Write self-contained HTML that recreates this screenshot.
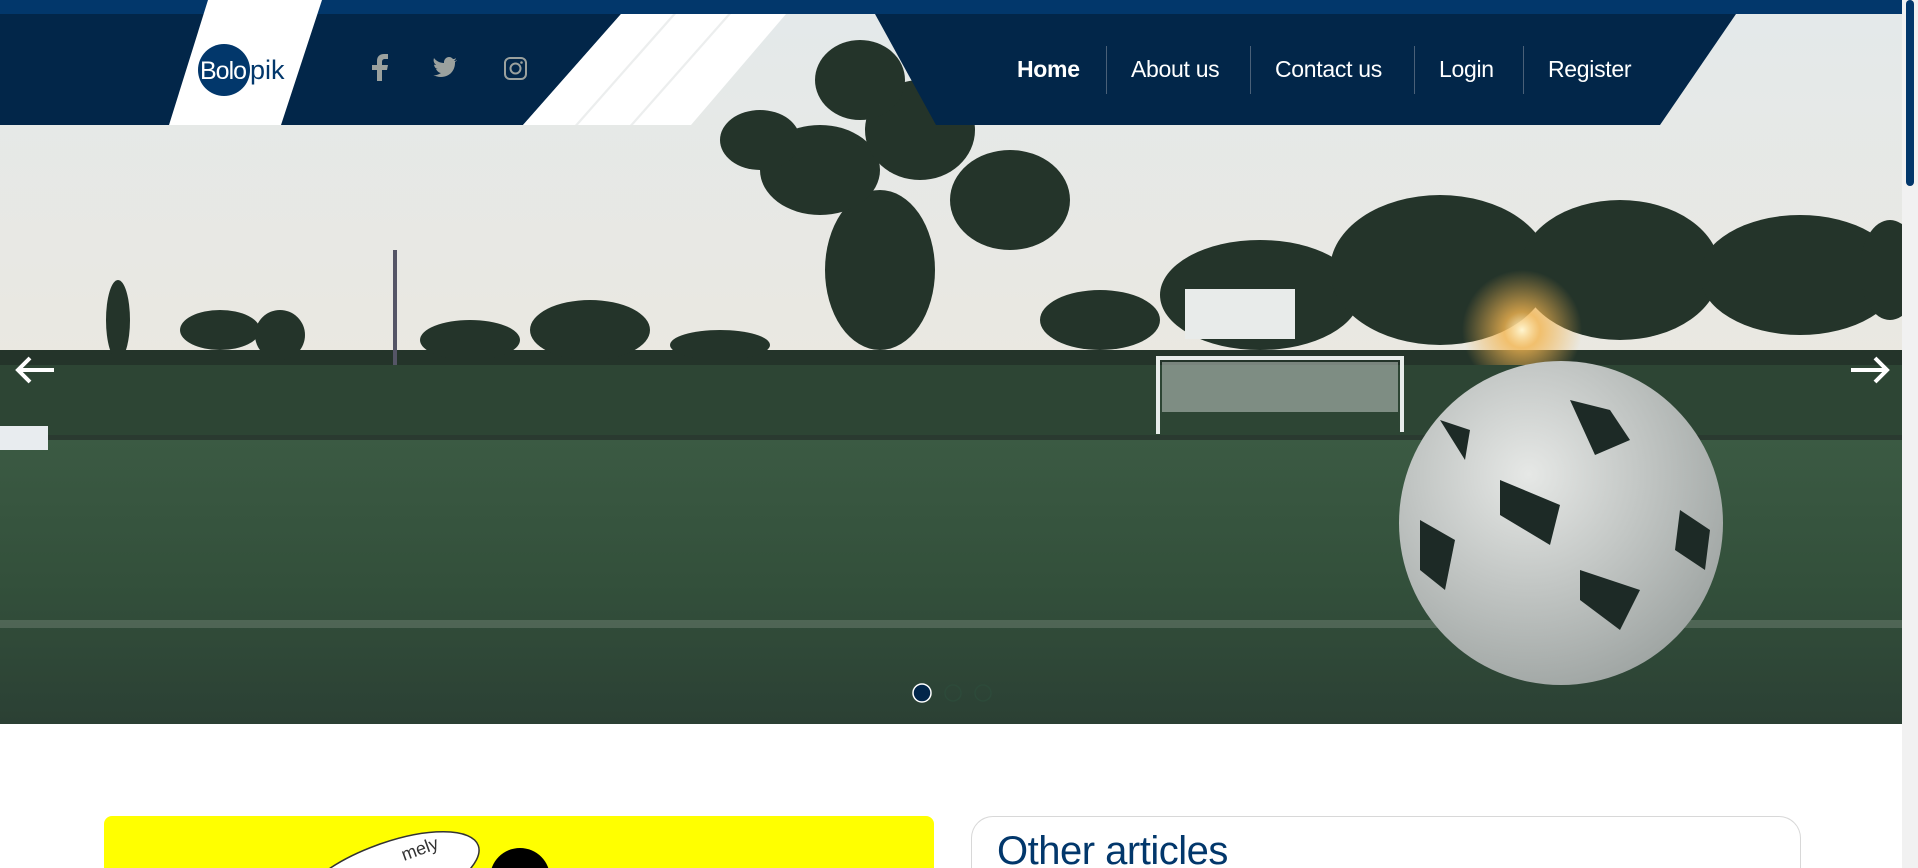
<!DOCTYPE html>
<html style="overflow:hidden"><head><meta charset="utf-8"><style>
*{margin:0;padding:0;box-sizing:border-box}
html,body{width:1918px;height:868px;overflow:hidden}
body{background:#fff;font-family:"Liberation Sans",sans-serif;position:relative}
.abs{position:absolute}
.nav a{position:absolute;top:56px;color:#fff;font-size:23px;text-decoration:none;letter-spacing:-0.3px}
.sep{position:absolute;top:46px;width:1px;height:48px;background:#4a6078}
</style></head><body>
<!-- hero -->
<svg class="abs" style="left:0;top:14px" width="1902" height="710" viewBox="0 14 1902 710">
<defs>
<linearGradient id="sky" x1="0" y1="0" x2="0" y2="1"><stop offset="0" stop-color="#e4e9ea"/><stop offset="1" stop-color="#ebe8df"/></linearGradient>
<linearGradient id="field" x1="0" y1="0" x2="0" y2="1"><stop offset="0" stop-color="#3b5a43"/><stop offset="0.5" stop-color="#33503b"/><stop offset="1" stop-color="#2b4034"/></linearGradient>
<radialGradient id="sun" cx="0.5" cy="0.5" r="0.5"><stop offset="0" stop-color="#fff6d0"/><stop offset="0.3" stop-color="#f3b550" stop-opacity="0.8"/><stop offset="1" stop-color="#f3b550" stop-opacity="0"/></radialGradient>
<radialGradient id="ball" cx="0.4" cy="0.35" r="0.7"><stop offset="0" stop-color="#e6e8e6"/><stop offset="1" stop-color="#9ea4a2"/></radialGradient>
</defs>
<rect x="0" y="14" width="1902" height="420" fill="url(#sky)"/>
<!-- treeline -->
<g fill="#24342a">
<rect x="0" y="350" width="1902" height="30"/>
<ellipse cx="118" cy="320" rx="12" ry="40"/><ellipse cx="220" cy="330" rx="40" ry="20"/><ellipse cx="280" cy="335" rx="25" ry="25"/>
<ellipse cx="470" cy="340" rx="50" ry="20"/><ellipse cx="590" cy="330" rx="60" ry="30"/>
<ellipse cx="720" cy="345" rx="50" ry="15"/>
<ellipse cx="880" cy="270" rx="55" ry="80"/><ellipse cx="820" cy="170" rx="60" ry="45"/><ellipse cx="920" cy="130" rx="55" ry="50"/>
<ellipse cx="1010" cy="200" rx="60" ry="50"/><ellipse cx="860" cy="80" rx="45" ry="40"/><ellipse cx="760" cy="140" rx="40" ry="30"/>
<ellipse cx="1100" cy="320" rx="60" ry="30"/><ellipse cx="1260" cy="295" rx="100" ry="55"/>
<ellipse cx="1440" cy="270" rx="110" ry="75"/><ellipse cx="1620" cy="270" rx="100" ry="70"/>
<ellipse cx="1800" cy="275" rx="100" ry="60"/><ellipse cx="1890" cy="270" rx="30" ry="50"/>
</g>
<rect x="393" y="250" width="4" height="120" fill="#556"/>
<rect x="1185" y="289" width="110" height="50" fill="#e8ebea"/>
<circle cx="1522" cy="330" r="60" fill="url(#sun)"/>
<!-- hedge -->
<rect x="0" y="365" width="1902" height="75" fill="#2d4534"/>
<rect x="0" y="435" width="1902" height="10" fill="#2a3a30"/>
<!-- field -->
<rect x="0" y="440" width="1902" height="284" fill="url(#field)"/>
<rect x="0" y="620" width="1902" height="8" fill="#6d7f72" opacity="0.5"/>
<!-- goal -->
<g stroke="#e8ecea" stroke-width="4" fill="none"><path d="M1158 434V358H1402V432"/></g>
<rect x="1162" y="362" width="236" height="50" fill="#cfd6d2" opacity="0.5"/>
<rect x="0" y="426" width="48" height="24" fill="#e8ecef"/>
<!-- ball -->
<circle cx="1561" cy="523" r="162" fill="url(#ball)"/>
<g fill="#1d2a26">
<path d="M1570 400l40 10 20 30-35 15z"/><path d="M1500 480l60 25-10 40-50-30z"/>
<path d="M1420 520l35 20-10 50-25-20z"/><path d="M1580 570l60 20-20 40-40-30z"/>
<path d="M1680 510l30 20-5 40-30-20z"/><path d="M1440 420l30 10-5 30z"/>
</g>
</svg>
<!-- top bar -->
<div class="abs" style="left:0;top:0;width:1902px;height:14px;background:#02376b"></div>
<svg class="abs" style="left:0;top:0" width="1902" height="126">
<polygon points="0,14 621,14 523,125 0,125" fill="#022649"/>
<polygon points="621,14 786,14 691,125 523,125" fill="#fff"/>
<polygon points="673,14 676,14 578,125 575,125" fill="#eceeee"/>
<polygon points="728,14 731,14 633,125 630,125" fill="#eceeee"/>
<polygon points="875,14 1736,14 1660,125 936,125" fill="#022649"/>
<polygon points="208,0 322,0 281,125 169,125" fill="#fff"/>
<circle cx="224" cy="70" r="26" fill="#02376b"/>
<text x="200" y="79" font-family="Liberation Sans" font-size="25" fill="#fff" letter-spacing="-1">Bolo</text>
<text x="250" y="79" font-family="Liberation Sans" font-size="27" fill="#02376b">pik</text>
<path d="M377 81V70h-5v-5h5v-4c0-5 3-7 7-7h4v5h-3c-2 0-3 1-3 3v3h6l-1 5h-5v11z" fill="#9ba19e"/>
<path d="M457 60c-1 1-2 1-3 1 1-1 2-2 2-3-1 1-2 1-3 1-1-1-2-2-4-2-3 0-5 3-5 5v1c-4 0-8-2-10-5-1 3 0 5 2 7-1 0-2 0-2-1 0 3 2 5 4 5-1 0-2 0-2 0 1 2 3 4 5 4-2 1-5 3-8 2 2 1 5 2 8 2 9 0 14-7 14-14v-1c1-1 2-1 2-2z" fill="#9ba19e"/>
<rect x="505" y="58" width="21" height="21" rx="5" fill="none" stroke="#9ba19e" stroke-width="2"/>
<circle cx="515.5" cy="68.5" r="5" fill="none" stroke="#9ba19e" stroke-width="2"/>
<circle cx="521.5" cy="62.5" r="1.3" fill="#9ba19e"/>
</svg>
<div class="nav">
<a style="left:1017px;font-weight:bold">Home</a>
<div class="sep" style="left:1106px"></div>
<a style="left:1131px">About us</a>
<div class="sep" style="left:1250px"></div>
<a style="left:1275px">Contact us</a>
<div class="sep" style="left:1414px"></div>
<a style="left:1439px">Login</a>
<div class="sep" style="left:1523px"></div>
<a style="left:1548px">Register</a>
</div>
<svg class="abs" style="left:14px;top:356px" width="42" height="28"><path d="M40 14H4M16 2L4 14l12 12" stroke="#fff" stroke-width="4" fill="none"/></svg>
<svg class="abs" style="left:1849px;top:356px" width="42" height="28"><path d="M2 14h36M26 2l12 12-12 12" stroke="#fff" stroke-width="4" fill="none"/></svg>
<svg class="abs" style="left:910px;top:682px" width="90" height="22">
<circle cx="12" cy="11" r="9" fill="#02264a" stroke="#fff" stroke-width="1.5"/>
<circle cx="43" cy="11" r="8" fill="none" stroke="#2d4a3a" stroke-width="1.5"/>
<circle cx="73" cy="11" r="8" fill="none" stroke="#2d4a3a" stroke-width="1.5"/>
</svg>
<div class="abs" style="left:1902px;top:0;width:16px;height:868px;background:#f1f1f1"></div>
<div class="abs" style="left:1906px;top:0;width:8px;height:186px;background:#02376b;border-radius:4px"></div>
<div class="abs" style="left:104px;top:816px;width:830px;height:52px;background:#ff0;border-radius:8px 8px 0 0;overflow:hidden">
<svg width="830" height="52"><ellipse cx="285" cy="62" rx="95" ry="35" transform="rotate(-20 285 62)" fill="#fff" stroke="#333" stroke-width="1.5"/>
<text x="300" y="45" font-size="18" fill="#333" transform="rotate(-20 300 45)" font-family="Liberation Sans">mely</text>
<circle cx="416" cy="62" r="30" fill="#000"/></svg>
</div>
<div class="abs" style="left:971px;top:816px;width:830px;height:52px;border:1.5px solid #d8d8d8;border-bottom:none;border-radius:22px 22px 0 0;overflow:hidden">
<div style="position:absolute;left:25px;top:12px;font-size:40px;color:#02376b;letter-spacing:-0.5px">Other articles</div>
</div>
</body></html>
